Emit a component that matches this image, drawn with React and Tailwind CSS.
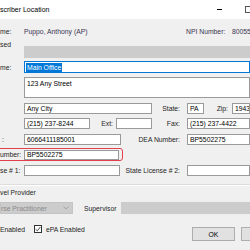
import React from 'react';

function Field({ children, className = '' }) {
    return (
        <div className={`flex items-center overflow-hidden whitespace-nowrap border border-[#9a9a9a] bg-white pl-[2px] text-black ${className}`}>
            {children}
        </div>
    );
}

function Label({ children, className = '' }) {
    return (
        <div className={`flex shrink-0 items-center justify-end whitespace-nowrap text-[#1e1e1e] ${className}`}>
            {children}
        </div>
    );
}

export default function App() {
    return (
        <div className="relative h-[250px] w-[250px] overflow-hidden bg-[#f0f0f0] font-['Liberation_Sans',Arial,sans-serif] text-[6.8px] leading-[9px] text-[#1e1e1e]">
            {/* title bar */}
            <div className="flex h-[19px] items-center bg-white">
                <span className="text-[7px] text-black">scriber Location</span>
                <div className="ml-auto mr-[23px] h-px w-[5px] bg-black" />
                <div className="mr-[-2px] h-[7px] w-[7px] border border-[#555]" />
            </div>

            {/* prescriber */}
            <div className="mt-[7px] flex h-[10px] items-center">
                <div className="w-[24px] shrink-0">me:</div>
                <div className="w-[162px] shrink-0 text-[#3a3450]">Puppo, Anthony (AP)</div>
                <div className="w-[46px] shrink-0 text-[#3a3450]">NPI Number:</div>
                <div className="whitespace-nowrap text-[#3a3450]">8005551234</div>
            </div>

            {/* disabled */}
            <div className="mt-[4px] flex h-[18px]">
                <div className="w-[24px] shrink-0">sed</div>
                <div className="mt-[6px] h-[12px] flex-1 bg-[#cccccc]" />
            </div>

            {/* location name */}
            <div className="mt-[3px] flex h-[12px] items-center">
                <div className="w-[24px] shrink-0">me:</div>
                <div className="flex h-[12px] flex-1 items-center border border-[#0078d7] bg-white pl-px">
                    <span className="bg-[#0078d7] px-px text-white">Main Office</span>
                </div>
            </div>

            {/* address */}
            <div className="mt-[4px] flex h-[21px]">
                <div className="w-[24px] shrink-0" />
                <div className="flex-1 border border-[#9a9a9a] bg-white pl-[2px] pt-[1px] text-black">123 Any Street</div>
            </div>

            {/* city / state / zip */}
            <div className="mt-[5px] flex h-[11px]">
                <div className="w-[24px] shrink-0" />
                <Field className="w-[128px] shrink-0">Any City</Field>
                <Label className="w-[35px] pr-[7px]">State:</Label>
                <Field className="w-[17px] shrink-0">PA</Field>
                <Label className="w-[28px] pr-[4px]">Zip:</Label>
                <Field className="flex-1">19438</Field>
            </div>

            {/* phone / ext / fax */}
            <div className="mt-[4px] flex h-[11px]">
                <div className="w-[24px] shrink-0" />
                <Field className="w-[66px] shrink-0">(215) 237-8244</Field>
                <Label className="w-[26px] pr-[3px]">Ext:</Label>
                <Field className="w-[36px] shrink-0" />
                <Label className="w-[35px] pr-[7px]">Fax:</Label>
                <Field className="flex-1">(215) 237-4422</Field>
            </div>

            {/* npi / dea */}
            <div className="mt-[5px] flex h-[11px]">
                <div className="flex w-[24px] shrink-0 items-center pl-[2px]">:</div>
                <Field className="w-[97px] shrink-0">6066411185001</Field>
                <Label className="w-[66px] pr-[7px]">DEA Number:</Label>
                <Field className="flex-1">BP5502275</Field>
            </div>

            {/* highlighted number */}
            <div className="mt-[3px] flex h-[13px]">
                <div className="-ml-[4px] flex h-[13px] w-[127px] items-center rounded-[3px] border border-[#e3404e]">
                    <div className="w-[27px] shrink-0 pl-[3px]">umber:</div>
                    <Field className="h-[10px] w-[95px] shrink-0">BP5502275</Field>
                </div>
            </div>

            {/* licenses */}
            <div className="mt-[4px] flex h-[11px]">
                <div className="flex w-[24px] shrink-0 items-center">se # 1:</div>
                <Field className="w-[96px] shrink-0" />
                <Label className="w-[67px] pr-[7px]">State License # 2:</Label>
                <Field className="flex-1" />
            </div>

            {/* separator */}
            <div className="mt-[8px] h-[2px] border-t border-b border-t-[#dcdcdc] border-b-white" />

            <div className="mt-[2px] h-[9px] whitespace-nowrap">vel Provider</div>

            {/* provider type / supervisor */}
            <div className="mt-[5px] flex h-[12px] items-center">
                <div className="flex h-[12px] w-[73px] shrink-0 items-center justify-between border border-[#c4c4c4] bg-[#cccccc] pr-[3px] text-[#8a8a8a]">
                    <span className="whitespace-nowrap">rse Practitioner</span>
                    <svg width="6" height="4" viewBox="0 0 6 4">
                        <path d="M0.5 0.5 L3 3 L5.5 0.5" fill="none" stroke="#9a9a9a" strokeWidth="0.8" />
                    </svg>
                </div>
                <div className="ml-[11px] w-[37px] shrink-0">Supervisor</div>
                <div className="h-[12px] flex-1 bg-[#cccccc]" />
            </div>

            {/* checkboxes + buttons */}
            <div className="mt-[10px] flex h-[17px] items-start">
                <div className="flex h-[10px] items-center">Enabled</div>
                <div className="ml-[9px] mt-[1px] flex h-[8px] w-[8px] items-center justify-center border border-[#333] bg-white">
                    <svg width="6" height="6" viewBox="0 0 6 6">
                        <path d="M0.6 3.2 L2.3 4.8 L5.4 1" fill="none" stroke="#222" strokeWidth="0.8" />
                    </svg>
                </div>
                <div className="ml-[4px] flex h-[10px] items-center">ePA Enabled</div>
                <div className="ml-auto mt-[3px] flex gap-[6px]">
                    <div className="flex h-[14px] w-[43px] items-center justify-center border border-[#adadad] bg-[#e1e1e1] text-black">OK</div>
                    <div className="-mr-[34px] flex h-[14px] w-[43px] items-center justify-center border border-[#adadad] bg-[#e1e1e1] text-black">Cancel</div>
                </div>
            </div>
        </div>
    );
}
